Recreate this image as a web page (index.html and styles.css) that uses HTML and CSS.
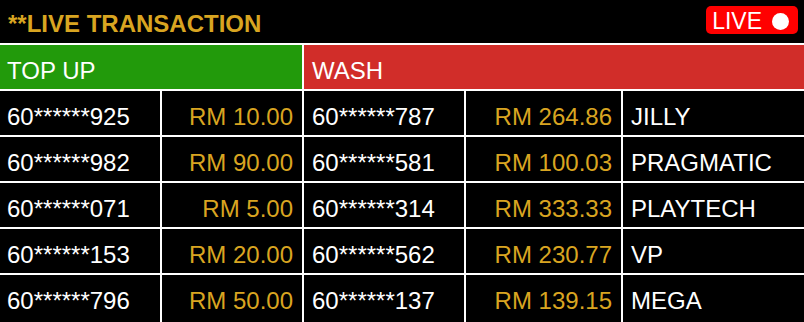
FILE: index.html
```html
<!DOCTYPE html>
<html lang="en">
<head>
<meta charset="utf-8">
<title>Live Transaction</title>
<link rel="stylesheet" href="styles.css">
</head>
<body>
<div class="title-bar">
  <h1 class="title">**LIVE TRANSACTION</h1>
  <span class="live-badge">LIVE<span class="live-dot"></span></span>
</div>
<div class="board">
  <div class="head head-topup">TOP UP</div>
  <div class="head head-wash">WASH</div>

  <div class="cell phone first">60******925</div>
  <div class="cell amount">RM 10.00</div>
  <div class="cell phone">60******787</div>
  <div class="cell amount">RM 264.86</div>
  <div class="cell game">JILLY</div>

  <div class="cell phone first">60******982</div>
  <div class="cell amount">RM 90.00</div>
  <div class="cell phone">60******581</div>
  <div class="cell amount">RM 100.03</div>
  <div class="cell game">PRAGMATIC</div>

  <div class="cell phone first">60******071</div>
  <div class="cell amount">RM 5.00</div>
  <div class="cell phone">60******314</div>
  <div class="cell amount">RM 333.33</div>
  <div class="cell game">PLAYTECH</div>

  <div class="cell phone first">60******153</div>
  <div class="cell amount">RM 20.00</div>
  <div class="cell phone">60******562</div>
  <div class="cell amount">RM 230.77</div>
  <div class="cell game">VP</div>

  <div class="cell phone first">60******796</div>
  <div class="cell amount">RM 50.00</div>
  <div class="cell phone">60******137</div>
  <div class="cell amount">RM 139.15</div>
  <div class="cell game">MEGA</div>
</div>
</body>
</html>
```
FILE: styles.css
```css
* {
  box-sizing: border-box;
}

html, body {
  margin: 0;
  background: #000;
  font-family: "Liberation Sans", Arial, sans-serif;
  color: #fff;
}

.title-bar {
  display: flex;
  justify-content: space-between;
  align-items: flex-start;
  height: 43px;
  padding: 6px 6px 0 8px;
}

.title {
  margin: 0;
  padding-top: 4px;
  font-size: 24px;
  line-height: 27px;
  font-weight: 700;
  color: #d9a521;
}

.live-badge {
  display: flex;
  align-items: center;
  gap: 10px;
  height: 28px;
  padding: 3px 9px 0 6px;
  background: #ff0000;
  border-radius: 5px;
  font-size: 23px;
  line-height: 25px;
  color: #fff;
}

.live-dot {
  width: 17px;
  height: 17px;
  border-radius: 50%;
  background: #fff;
}

.board {
  display: grid;
  grid-template-columns: 160px 140px 160px 155px 181px;
  grid-template-rows: repeat(5, 44px) 50px;
  gap: 2px;
  padding-top: 2px;
  background: #fff;
}

.head,
.cell {
  display: flex;
  align-items: flex-start;
  padding: 11.5px 8px 0;
  font-size: 24px;
  line-height: 27px;
  white-space: nowrap;
}

.head {
  color: #fff;
}

.head-topup {
  grid-column: span 2;
  background: #229a0b;
  padding-left: 7px;
}

.head-wash {
  grid-column: span 3;
  background: #d12d29;
}

.cell {
  background: #000;
}

.first {
  padding-left: 7px;
}

.amount {
  justify-content: flex-end;
  color: #d9a521;
  padding-right: 9px;
}
```
